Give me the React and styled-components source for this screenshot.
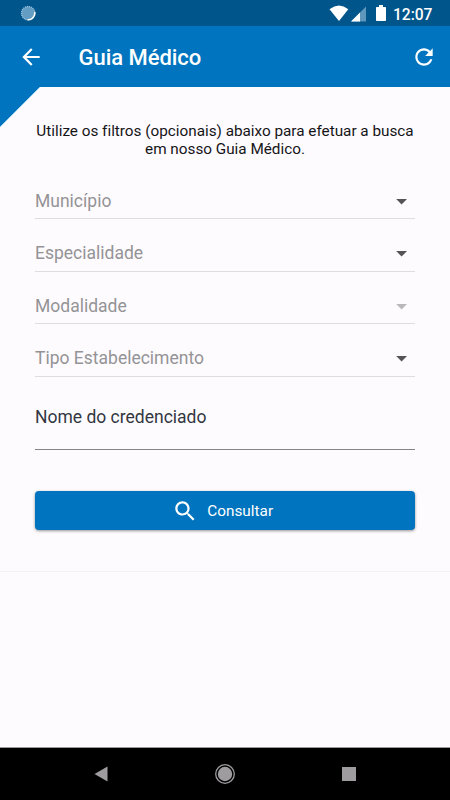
import React from "react";
import styled, { createGlobalStyle } from "styled-components";

const GlobalStyle = createGlobalStyle`
  *, *::before, *::after { box-sizing: border-box; }
  body { margin: 0; background: #fefbff; }
`;

const Screen = styled.div`
  width: 450px;
  height: 800px;
  display: flex;
  flex-direction: column;
  overflow: hidden;
  background: #fefbff;
  font-family: Roboto, "Liberation Sans", sans-serif;
`;

const StatusBar = styled.div`
  height: 26px;
  flex: none;
  display: flex;
  align-items: center;
  justify-content: space-between;
  padding: 0 17.5px 0 20px;
  background: #00558b;
  color: #fff;
`;

const StatusIcons = styled.div`
  display: flex;
  align-items: center;
`;

const Clock = styled.span`
  margin-left: 3px;
  padding-top: 3px;
  font-size: 15.6px;
  font-weight: 500;
  line-height: 24px;
`;

const AppBar = styled.header`
  height: 61px;
  flex: none;
  display: flex;
  align-items: center;
  padding: 0 13px 0 17.6px;
  background: #0074be;
  color: #fff;
`;

const Title = styled.h1`
  flex: 1;
  margin: 0 0 0 35px;
  padding-top: 3px;
  font-size: 22px;
  font-weight: 500;
  line-height: 28px;
  letter-spacing: -0.05px;
`;

const IconButton = styled.button`
  display: flex;
  padding: 1px 0 0;
  border: 0;
  background: none;
  color: inherit;
`;

const Content = styled.main`
  flex: 1;
  min-height: 0;
  background: linear-gradient(135deg, #0074be 27.9px, transparent 28.5px);
`;

const FilterForm = styled.form`
  height: 485px;
  display: flex;
  flex-direction: column;
  padding: 35px 35px 0;
  border-bottom: 1px solid #f3f1f6;
`;

const Intro = styled.p`
  margin: 0 0 30.4px;
  font-size: 15.3px;
  line-height: 18px;
  letter-spacing: -0.01px;
  text-align: center;
  white-space: nowrap;
  color: #151517;
`;

const SelectRow = styled.div`
  height: 52.5px;
  flex: none;
  display: flex;
  flex-direction: column;
`;

const SelectLine = styled.div`
  height: 25px;
  display: flex;
  align-items: center;
  justify-content: space-between;
  padding-right: 8px;
  font-size: 17.5px;
  line-height: 24px;
  color: #949395;
`;

const Rule = styled.div`
  height: 1px;
  margin-top: ${({ $gap }) => $gap}px;
  background: ${({ $color }) => $color};
`;

const Field = styled.div`
  margin-top: 6.6px;
  color: #32373f;
  font-size: 17.5px;
  line-height: 24px;
`;

const SubmitButton = styled.button`
  height: 39px;
  flex: none;
  display: flex;
  align-items: center;
  justify-content: center;
  gap: 9px;
  margin-top: 41px;
  padding: 1px 5px 0 0;
  border: 0;
  border-radius: 4px;
  background: #0074be;
  box-shadow: 0 1px 3px rgba(0, 0, 0, 0.42);
  color: #fff;
  font: 400 15.3px/20px Roboto, sans-serif;
  letter-spacing: 0.02px;
`;

const NavBar = styled.nav`
  height: 53px;
  flex: none;
  display: grid;
  grid-template-columns: repeat(3, 124px);
  justify-content: center;
  align-items: center;
  justify-items: center;
  padding-bottom: 1px;
  border-top: 1px solid #999;
  background: #000;
`;

const selects = [
  { label: "Município" },
  { label: "Especialidade" },
  { label: "Modalidade", disabled: true },
  { label: "Tipo Estabelecimento" },
];

const SyncIcon = () => (
  <svg width="17" height="17" viewBox="0 0 17 17">
    <circle cx="8.2" cy="8.2" r="6.8" fill="#639dc4" />
    <circle cx="8.2" cy="8.2" r="6.7" fill="none" stroke="#9bc2db" strokeWidth="1.3" strokeDasharray="1.2 .8" />
    <path d="M14.8 7.2A6.8 6.8 0 0 1 7.6 14.8" fill="none" stroke="#fff" strokeWidth="1.6" />
  </svg>
);

const WifiIcon = () => (
  <svg width="21" height="17" viewBox="0 0 21 17">
    <path d="M.5 4.3Q10 -3.1 19.3 4.3L10 16Z" fill="#fff" />
  </svg>
);

const SignalIcon = () => (
  <svg width="17" height="17" viewBox="0 0 17 17">
    <path d="M1 16.5L16 1.5V16.5Z" fill="#5e96bc" />
    <path d="M1 16.5L10 7.5V16.5Z" fill="#fff" />
  </svg>
);

const BatteryIcon = () => (
  <svg width="23" height="18" viewBox="-5 0 23 18">
    <path d="M7 1h4v2h2.2q.8 0 .8.8v12.4q0 .8-.8.8H4.8q-.8 0-.8-.8V3.8Q4 3 4.8 3H7Z" fill="#fff" />
  </svg>
);

const BackIcon = () => (
  <svg width="26" height="26" viewBox="0 0 24 24" fill="currentColor">
    <path d="M20 11H7.83l5.59-5.59L12 4l-8 8 8 8 1.41-1.41L7.83 13H20v-2z" />
  </svg>
);

const RefreshIcon = () => (
  <svg width="26" height="26" viewBox="0 0 24 24" fill="currentColor">
    <path d="M17.65 6.35C16.2 4.9 14.21 4 12 4c-4.42 0-7.99 3.58-7.99 8s3.57 8 7.99 8c3.73 0 6.84-2.55 7.73-6h-2.08c-.82 2.33-3.04 4-5.65 4-3.31 0-6-2.69-6-6s2.69-6 6-6c1.66 0 3.14.69 4.22 1.78L13 11h7V4l-2.35 2.35z" />
  </svg>
);

const SearchIcon = () => (
  <svg width="26.4" height="26.4" viewBox="0 0 24 24" fill="currentColor">
    <path d="M15.5 14h-.79l-.28-.27C15.41 12.59 16 11.11 16 9.5 16 5.91 13.09 3 9.5 3S3 5.91 3 9.5 5.91 16 9.5 16c1.61 0 3.09-.59 4.23-1.57l.27.28v.79l5 4.99L20.49 19l-4.99-5zm-6 0C7.01 14 5 11.99 5 9.5S7.01 5 9.5 5 14 7.01 14 9.5 11.99 14 9.5 14z" />
  </svg>
);

const Caret = ({ color }) => (
  <svg width="11" height="8" viewBox="0 0 11 8">
    <path d="M.2 2H11L5.6 7.6Z" fill={color} />
  </svg>
);

const FilterSelect = ({ label, disabled }) => (
  <SelectRow>
    <SelectLine>
      <span>{label}</span>
      <Caret color={disabled ? "#b9b8ba" : "#545456"} />
    </SelectLine>
    <Rule $gap={5} $color="#dfdde0" />
  </SelectRow>
);

export default function App() {
  return (
    <>
      <GlobalStyle />
      <Screen>
        <StatusBar>
          <SyncIcon />
          <StatusIcons>
            <WifiIcon />
            <SignalIcon />
            <BatteryIcon />
            <Clock>12:07</Clock>
          </StatusIcons>
        </StatusBar>
        <AppBar>
          <IconButton type="button" aria-label="Voltar">
            <BackIcon />
          </IconButton>
          <Title>Guia Médico</Title>
          <IconButton type="button" aria-label="Atualizar">
            <RefreshIcon />
          </IconButton>
        </AppBar>
        <Content>
          <FilterForm>
            <Intro>
              Utilize os filtros (opcionais) abaixo para efetuar a busca
              <br />
              em nosso Guia Médico.
            </Intro>
            {selects.map((item) => (
              <FilterSelect key={item.label} {...item} />
            ))}
            <Field>
              <span>Nome do credenciado</span>
              <Rule $gap={20} $color="#858487" />
            </Field>
            <SubmitButton type="button">
              <SearchIcon />
              Consultar
            </SubmitButton>
          </FilterForm>
        </Content>
        <NavBar>
          <svg width="14" height="16" viewBox="0 0 14 16">
            <path d="M.5 8L13.5 .5V15.5Z" fill="#9e9c9f" />
          </svg>
          <svg width="22" height="22" viewBox="0 0 22 22">
            <circle cx="11" cy="11" r="9.3" fill="none" stroke="#9e9c9f" strokeWidth="1.3" />
            <circle cx="11" cy="11" r="7.2" fill="#9e9c9f" />
          </svg>
          <svg width="14" height="14" viewBox="0 0 14 14">
            <rect width="14" height="14" fill="#9e9c9f" />
          </svg>
        </NavBar>
      </Screen>
    </>
  );
}
